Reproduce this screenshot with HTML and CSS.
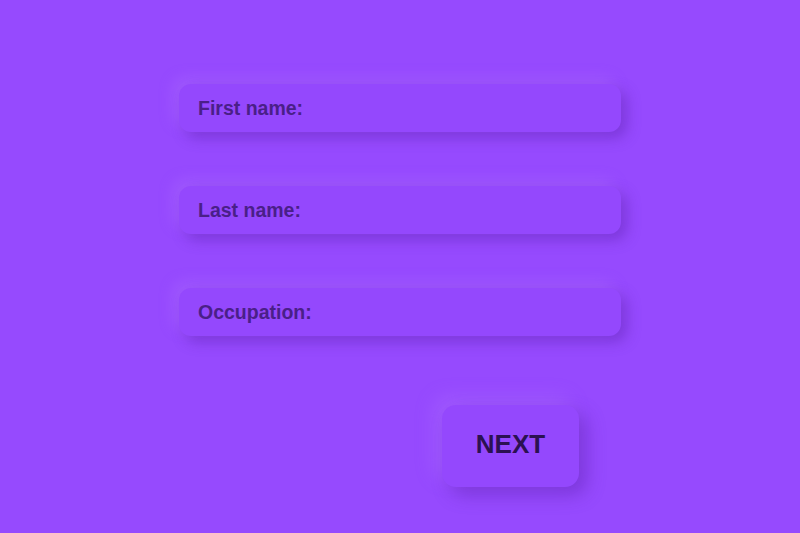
FILE: index.html
```html
<!DOCTYPE html>
<html>
<head>
<meta charset="utf-8">
<link rel="stylesheet" href="styles.css">
</head>
<body>
<main class="form">
  <div class="field"><span class="label">First name:</span></div>
  <div class="field"><span class="label">Last name:</span></div>
  <div class="field"><span class="label">Occupation:</span></div>
  <div class="actions">
    <button class="next">NEXT</button>
  </div>
</main>
</body>
</html>
```
FILE: styles.css
```css
html, body {
  margin: 0;
  padding: 0;
  width: 800px;
  height: 533px;
  background: #964afe;
  overflow: hidden;
  font-family: "Liberation Sans", Arial, sans-serif;
}
.form {
  display: flex;
  flex-direction: column;
  gap: 54px;
  padding: 84px 0 0 179px;
  width: 442px;
}
.field {
  height: 48px;
  border-radius: 12px;
  background: #9448fd;
  box-shadow: 6px 6px 14px rgba(90, 30, 170, 0.42), -6px -6px 14px rgba(175, 110, 255, 0.42);
  display: flex;
  align-items: center;
  padding-left: 19px;
}
.label {
  font-size: 19.5px;
  font-weight: bold;
  color: #4a1f88;
  padding-top: 1px;
}
.actions {
  display: flex;
  justify-content: flex-end;
  padding-right: 42px;
  margin-top: 15px;
}
.next {
  width: 137px;
  height: 82px;
  border: none;
  border-radius: 14px;
  background: #9448fd;
  box-shadow: 8px 8px 18px rgba(90, 30, 170, 0.42), -8px -8px 18px rgba(175, 110, 255, 0.42);
  font-family: "Liberation Sans", Arial, sans-serif;
  font-size: 26px;
  font-weight: bold;
  color: #2b1152;
  padding: 0 0 3px 0;
}
```
